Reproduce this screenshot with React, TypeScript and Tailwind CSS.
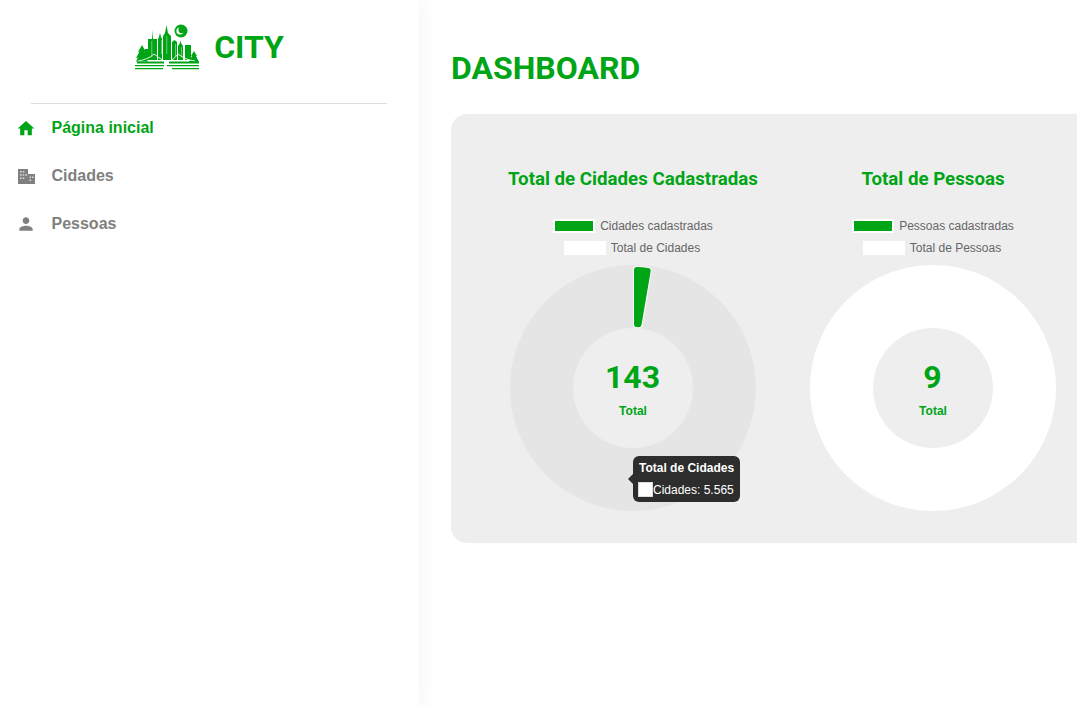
import React from 'react';
import { MdHome, MdPerson } from 'react-icons/md';

const arial = "font-['Liberation_Sans',Arial,sans-serif]";
const roboto = "font-['Roboto',sans-serif]";

const Logo = () => (
  <svg width="66" height="50" viewBox="0 0 66 50" fill="#00a516">
    <circle cx="46" cy="9" r="6.5" />
    <circle cx="45" cy="9" r="3.6" fill="#fff" />
    <circle cx="46.8" cy="7.8" r="3.4" fill="#00a516" />
    {/* skyline */}
    <path d="M10 38V27h3V38ZM13 38V17h4l0.5-9 0.5 9h4V38ZM23 38V17l1-2 1-4 1 4 1 2V38ZM28 38V14l2-3 1.5-8 1.5 8 3 3V38ZM37 38V20l2.5-2 2.5 2V38ZM43 38V24l2-3 0.5-3 0.5 3 2 3V38ZM50 38V23h6V38Z" />
    <path d="M16.5 19h0.7v16h-0.7zM26 18h0.6v14h-0.6zM31.5 14h0.7v18h-0.7zM40 22h0.7v12h-0.7zM46 25h0.7v10h-0.7z" fill="#fff" opacity="0.6" />
    {/* trees */}
    <path d="M7 23l4 7-1.5-0.5 3.5 6.5-2-0.5 2 4H1l2-4-2 0.5 3.5-6.5-1.5 0.5zM59 29l3 5-1 0 3 6h-10l3-6-1 0z" />
    {/* bridge */}
    <path d="M3 39c6-1 12-3 16-7c4 3 8 6 12 8M33 40c4-2 7-4 10-8c5 4 10 6 17 7" fill="none" stroke="#fff" strokeWidth="0.9" />
    <path d="M2 39.5h27v2H2zM34 39.5h30v2H34z" />
    <path d="M0 43h29v1.2H0zM32 43h32v1.2H32zM0 46h28v1.2H0zM37 46h27v1.2H37z" />
  </svg>
);

const CityIcon = () => (
  <svg width="17" height="15" viewBox="0 0 17 15" fill="#808080">
    <path d="M0 0h10v5h7v10H0Z" />
    <path d="M2 2h1.6v1.6H2zM4.7 2h1.6v1.6H4.7zM2 5.2h1.6v1.6H2zM4.7 5.2h1.6v1.6H4.7zM7.4 5.2H9v1.6H7.4zM2 8.4h1.6V10H2zM4.7 8.4h1.6V10H4.7zM11.5 7.5h1.6v1.6h-1.6zM14 7.5h1.6v1.6H14zM11.5 10.5h1.6v1.6h-1.6z" fill="#ffffff" opacity="0.7" />
  </svg>
);

const NavItem = ({ icon, label, active }: { icon: React.ReactNode; label: string; active?: boolean }) => (
  <div className={`flex h-12 items-center pl-[16px] text-base font-bold ${arial} ${active ? 'text-[#00a516]' : 'text-[#808080]'}`}>
    <span className="flex w-[20px] justify-center">{icon}</span>
    <span className="ml-[15.5px]">{label}</span>
  </div>
);

// arc helper: radius and angle measured clockwise from the top
const pt = (r: number, deg: number) => {
  const a = ((deg - 90) * Math.PI) / 180;
  return `${125 + r * Math.cos(a)} ${125 + r * Math.sin(a)}`;
};

const sliceD = `M${pt(118, 1.95)} A118 118 0 0 1 ${pt(118, 7.15)} L${pt(64, 5)} A64 64 0 0 1 ${pt(64, 3.6)} Z`;

const Doughnut = ({ value, total, hover }: { value: number; total: string; hover?: boolean }) => (
  <div className="relative h-[250px] w-[250px]">
    <svg width="250" height="250" viewBox="0 0 250 250">
      <path
        fillRule="evenodd"
        fill={hover ? '#e5e5e5' : '#ffffff'}
        d="M125 2a123 123 0 1 1 -0.01 0zM125 65a60 60 0 1 0 0.01 0z"
      />
      {value > 0 && (
        <>
          <path d={sliceD} fill="#fff" stroke="#fff" strokeWidth="8" strokeLinejoin="round" />
          <path d={sliceD} fill="#00a516" stroke="#00a516" strokeWidth="6" strokeLinejoin="round" />
        </>
      )}
    </svg>
    <div className="absolute inset-0 flex flex-col items-center justify-center">
      <div className={`pr-[1px] text-[32px] font-bold leading-[38px] text-[#00a516] ${roboto}`}>{total}</div>
      <div className={`mt-[8px] text-xs font-bold leading-[14px] text-[#00a516] ${arial}`}>Total</div>
    </div>
  </div>
);

const Legend = ({ label, filled }: { label: string; filled?: boolean }) => (
  <div className={`flex h-[22px] items-center justify-center text-xs text-[#666666] ${arial} ${filled ? '' : 'pr-[2px]'}`}>
    {filled ? (
      <span className="h-[14px] w-[42px] border-2 border-white bg-[#00a516]" />
    ) : (
      <span className="h-[14px] w-[42px] bg-white" />
    )}
    <span className="ml-[5px]">{label}</span>
  </div>
);

const ChartCol = ({ title, legendA, legendB, children }: { title: string; legendA: string; legendB: string; children: React.ReactNode }) => (
  <div className="flex w-[300px] shrink-0 flex-col items-center">
    <h2 className={`h-[24px] whitespace-nowrap text-[18.72px] font-bold leading-[24px] text-[#00a516] ${roboto}`}>{title}</h2>
    <div className="mt-[24px] mb-[4px] flex flex-col">
      <Legend label={legendA} filled />
      <Legend label={legendB} />
    </div>
    {children}
  </div>
);

export default function App() {
  return (
    <div className="flex h-[707px] w-[1077px] overflow-hidden bg-white">
      <aside className="relative z-10 h-full w-[419px] shrink-0 bg-white shadow-[0_0_20px_rgba(0,0,0,0.06)]">
        <div className="flex h-[103px] items-start justify-center pt-[22px]">
          <Logo />
          <span className={`ml-[13px] mt-[4px] text-[32px] font-bold leading-[42px] text-[#00a516] ${roboto}`}>CITY</span>
        </div>
        <div className="ml-[31px] mr-[32px] h-px bg-[#dddddd]" />
        <nav>
          <NavItem icon={<MdHome size={23} color="#00a516" />} label="Página inicial" active />
          <NavItem icon={<CityIcon />} label="Cidades" />
          <NavItem icon={<MdPerson size={24} color="#808080" />} label="Pessoas" />
        </nav>
      </aside>
      <main className="min-w-0 flex-1 pl-[32px]">
        <h1 className={`mt-[47px] text-[32px] font-bold leading-[42px] text-[#00a516] ${roboto}`}>DASHBOARD</h1>
        <section className="mt-[25px] flex h-[429px] w-[700px] rounded-l-2xl bg-[#eeeeee] pl-[32px] pt-[53px]">
          <ChartCol title="Total de Cidades Cadastradas" legendA="Cidades cadastradas" legendB="Total de Cidades">
            <div className="relative">
              <Doughnut value={143} total="143" hover />
              <div className={`absolute left-[125px] top-[193px] flex h-[46px] w-[107px] flex-col whitespace-nowrap rounded-md bg-[#2d2d2d] px-[6px] pt-[5px] text-xs text-white ${arial}`}>
                <span className="absolute left-[-5px] top-[18px] h-0 w-0 border-y-[5px] border-r-[5px] border-y-transparent border-r-[#2d2d2d]" />
                <div className="font-bold leading-[14px]">Total de Cidades</div>
                <div className="mt-[7px] flex items-center leading-[14px]">
                  <span className="ml-[-1px] h-[15px] w-[15px] shrink-0 border border-[#dddddd] bg-white" />
                  <span>Cidades: 5.565</span>
                </div>
              </div>
            </div>
          </ChartCol>
          <ChartCol title="Total de Pessoas" legendA="Pessoas cadastradas" legendB="Total de Pessoas">
            <Doughnut value={0} total="9" />
          </ChartCol>
        </section>
      </main>
    </div>
  );
}
